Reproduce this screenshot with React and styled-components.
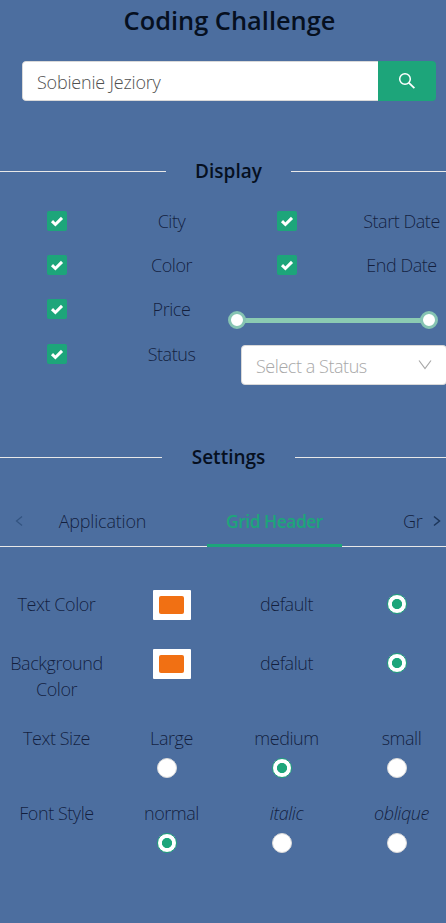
import React from "react";
import styled, { createGlobalStyle, css } from "styled-components";

const GREEN = "#1da57a";

const GlobalStyle = createGlobalStyle`
  * { box-sizing: border-box; }
  html, body { margin: 0; background: #4c6e9f; }
  body {
    overflow: hidden;
    font-family: "Open Sans", "Noto Sans", sans-serif;
    font-weight: 300;
    font-size: 18px;
    line-height: 26px;
    letter-spacing: -0.45px;
    color: rgba(0, 5, 28, 0.75);
  }
`;

const Page = styled.main`
  width: 446px;
  height: 923px;
  overflow: hidden;
  background: #4c6e9f;
`;

const Title = styled.h1`
  width: 459px;
  margin: 0;
  padding-top: 4px;
  text-align: center;
  font-size: 25.4px;
  font-weight: 600;
  line-height: 32px;
  letter-spacing: 0;
  color: #06101f;
`;

const SearchBar = styled.form`
  display: flex;
  width: 414px;
  height: 40px;
  margin: 25px 0 0 22px;
  border-radius: 4px;
  overflow: hidden;
`;

const SearchInput = styled.input`
  flex: 1;
  min-width: 0;
  padding: 2px 14px 1px;
  border: 1px solid #d9d9d9;
  border-right: 0;
  border-radius: 4px 0 0 4px;
  outline: none;
  background: #fff;
  font: inherit;
  letter-spacing: -0.2px;
  color: #505050;
`;

const SearchButton = styled.button`
  display: flex;
  align-items: center;
  justify-content: center;
  width: 58px;
  padding: 0;
  border: 0;
  background: ${GREEN};
  color: #fff;
`;

const Divider = styled.h2`
  display: flex;
  align-items: center;
  gap: 29.5px;
  width: 457px;
  height: 28px;
  margin: ${p => p.$top}px 0 0;
  font-size: 19px;
  font-weight: 600;
  letter-spacing: ${p => p.$ls || 0}px;
  color: #06101f;
  &::before, &::after {
    content: "";
    flex: 1;
    height: 1px;
    background: #e8e8e8;
  }
`;

const DisplayGrid = styled.section`
  display: grid;
  grid-template-columns: repeat(4, 115px);
  grid-template-rows: 44px 44px 44px 46px;
  width: 460px;
  margin: 14px 0 0 -1px;
  align-items: center;
  justify-items: center;
`;

const Cell = styled.div`
  display: flex;
  align-items: center;
  justify-content: center;
  width: 115px;
`;

const Wide = styled.div`
  grid-column: span 2;
  justify-self: stretch;
  align-self: start;
`;

const Box = styled.span`
  display: flex;
  align-items: center;
  justify-content: center;
  width: 20px;
  height: 20px;
  border-radius: 2px;
  background: ${GREEN};
`;

const Slider = styled.div`
  display: flex;
  align-items: center;
  justify-content: space-between;
  width: 210px;
  height: 18px;
  margin: 24px 0 0 -1px;
  background: linear-gradient(#8bcbb2, #8bcbb2) center / 194px 5px no-repeat;
`;

const Handle = styled.span`
  width: 18px;
  height: 18px;
  border: 3px solid #86c4b2;
  border-radius: 50%;
  background: #fff;
`;

const Select = styled.div`
  display: flex;
  align-items: center;
  justify-content: space-between;
  width: 206px;
  height: 40px;
  margin: 14px 0 0 12px;
  padding: 1px 14px 0;
  border: 1px solid #d9d9d9;
  border-radius: 4px;
  background: #fff;
  color: #a8a8a8;
`;

const Tabs = styled.nav`
  display: flex;
  align-items: stretch;
  width: 458px;
  height: 51px;
  margin-top: 25px;
  border-bottom: 1px solid #e8e8e8;
`;

const Arrow = styled.span`
  display: flex;
  align-items: center;
  justify-content: center;
  width: ${p => p.$w}px;
  color: ${p => (p.$dim ? "#335481" : "#1d365a")};
`;

const Tab = styled.div`
  width: ${p => p.$w}px;
  height: 51px;
  white-space: nowrap;
  padding-top: 11.5px;
  letter-spacing: -0.2px;
  text-align: center;
  ${p => p.$active && css`
    color: ${GREEN};
    font-size: 17.5px;
    font-weight: 600;
    letter-spacing: -0.52px;
    border-bottom: 3px solid ${GREEN};
  `}
`;

const Panel = styled.section`
  width: 460px;
  margin: 40px 0 0 -1px;
`;

const Row = styled.div`
  display: grid;
  grid-template-columns: repeat(4, 115px);
  height: ${p => p.$h}px;
  justify-items: center;
  align-items: start;
`;

const Label = styled.div`
  padding-top: ${p => (p.$offset ?? 4)}px;
  width: ${p => p.$w || 115}px;
  text-align: center;
  font-style: ${p => p.$style || "normal"};
`;

const Swatch = styled.div`
  width: 38px;
  height: 30px;
  margin-top: 3px;
  padding: 6px 7px 6px 6px;
  border-radius: 1px;
  background: #fff;
`;

const SwatchFill = styled.div`
  height: 18px;
  border-radius: 2px;
  background: #f17013;
`;

const Radio = styled.span`
  display: block;
  width: 20px;
  height: 20px;
  margin-top: ${p => p.$top || 0}px;
  margin-right: 10px;
  border: 1px solid ${p => (p.$on ? GREEN : "#d9d9d9")};
  border-radius: 50%;
  background: ${p => (p.$on ? `radial-gradient(circle, ${GREEN} 4.7px, #fff 5.4px)` : "#fff")};
`;

const OptionCell = styled.div`
  display: flex;
  flex-direction: column;
  align-items: center;
`;

const Option = ({ text, on, fontStyle }) => (
  <OptionCell>
    <Label $offset={0} $style={fontStyle}>{text}</Label>
    <Radio $top={7} $on={on} />
  </OptionCell>
);

const Check = () => (
  <Box>
    <svg width="14" height="14" viewBox="0 0 14 14" fill="none" stroke="#fff" strokeWidth="3">
      <path d="M2 7.2 5.4 10.5 12 3.9" />
    </svg>
  </Box>
);

const Chevron = ({ d, w, h, sw = 1.2 }) => (
  <svg width={w} height={h} viewBox={`0 0 ${w} ${h}`} fill="none" stroke="currentColor" strokeWidth={sw}>
    <path d={d} />
  </svg>
);

export default function App() {
  return (
    <Page>
      <GlobalStyle />
      <Title>Coding Challenge</Title>
      <SearchBar>
        <SearchInput defaultValue="Sobienie Jeziory" />
        <SearchButton type="button" aria-label="Search">
          <svg width="18" height="18" viewBox="0 0 18 18" fill="none" stroke="currentColor" strokeWidth="1.5">
            <circle cx="7" cy="7" r="5.3" />
            <path d="M10.9 10.9 16.4 16.2" strokeWidth="1.8" />
          </svg>
        </SearchButton>
      </SearchBar>

      <Divider $top={56}>Display</Divider>
      <DisplayGrid>
        <Cell><Check /></Cell>
        <Cell>City</Cell>
        <Cell><Check /></Cell>
        <Cell>Start Date</Cell>
        <Cell><Check /></Cell>
        <Cell>Color</Cell>
        <Cell><Check /></Cell>
        <Cell>End Date</Cell>
        <Cell><Check /></Cell>
        <Cell>Price</Cell>
        <Wide>
          <Slider><Handle /><Handle /></Slider>
        </Wide>
        <Cell><Check /></Cell>
        <Cell>Status</Cell>
        <Wide>
          <Select>
            <span>Select a Status</span>
            <Chevron w={14} h={14} d="M1 1.5 7 9.5 13 1.5" />
          </Select>
        </Wide>
      </DisplayGrid>

      <Divider $top={66}>Settings</Divider>
      <Tabs>
        <Arrow $w={37} $dim><Chevron w={8} h={12} d="M7 1.5 1.5 6 7 10.5" /></Arrow>
        <Tab $w={131}>Application</Tab>
        <Tab $w={39} />
        <Tab $w={135} $active>Grid Header</Tab>
        <Tab $w={61} />
        <Tab $w={17}>Gr</Tab>
        <Arrow $w={34}><Chevron w={8} h={12} d="M1 1.5 6.5 6 1 10.5" sw={1.5} /></Arrow>
      </Tabs>

      <Panel>
        <Row $h={59}>
          <Label>Text Color</Label>
          <Swatch><SwatchFill /></Swatch>
          <Label>default</Label>
          <Radio $top={7} $on />
        </Row>
        <Row $h={79}>
          <Label $w={100}>Background Color</Label>
          <Swatch><SwatchFill /></Swatch>
          <Label>defalut</Label>
          <Radio $top={7} $on />
        </Row>
        <Row $h={75}>
          <Label $offset={0}>Text Size</Label>
          <Option text="Large" />
          <Option text="medium" on />
          <Option text="small" />
        </Row>
        <Row $h={75}>
          <Label $offset={0}>Font Style</Label>
          <Option text="normal" on />
          <Option text="italic" fontStyle="italic" />
          <Option text="oblique" fontStyle="italic" />
        </Row>
      </Panel>
    </Page>
  );
}
